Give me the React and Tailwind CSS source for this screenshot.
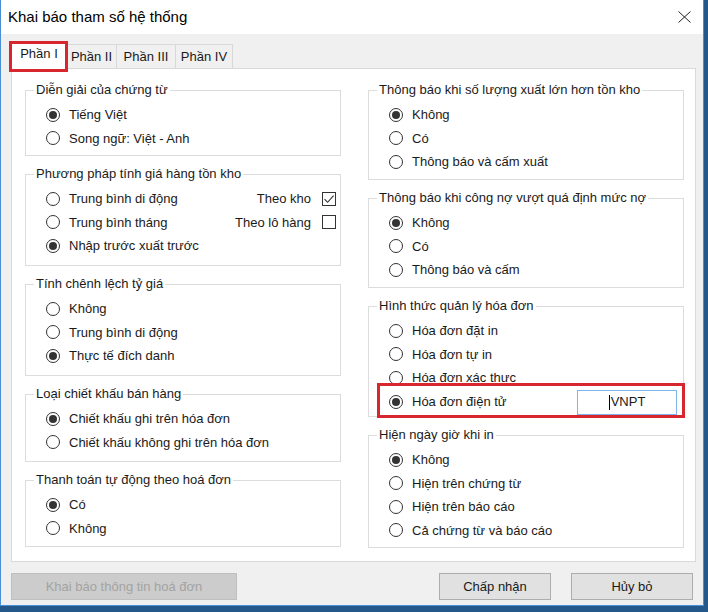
import React from 'react'

const Radio = ({ label, checked }) => (
  <div className="flex items-center h-[23.5px] pl-[20px] gap-[9px]">
    <span className="w-[14px] h-[14px] rounded-full border border-[#333] bg-white flex items-center justify-center shrink-0">
      {checked && <span className="w-[8px] h-[8px] rounded-full bg-[#333]"></span>}
    </span>
    <span>{label}</span>
  </div>
)

const Check = ({ checked }) => (
  <span className="w-[14px] h-[14px] border border-[#333] bg-white flex items-center justify-center shrink-0">
    {checked && (
      <svg width="12" height="12" viewBox="0 0 12 12">
        <path d="M1.5 6.2 L4.6 9.3 L10.6 2.6" fill="none" stroke="#333" strokeWidth="1.1" />
      </svg>
    )}
  </span>
)

const Group = ({ title, h, children }) => (
  <fieldset className={'border border-[#dcdcdc] ' + h}>
    <legend className="ml-[8px] px-[2px] leading-[16px]">{title}</legend>
    <div className="pt-[5px]">{children}</div>
  </fieldset>
)

const App = () => {
  return (
    <div className="w-[708px] h-[612px] bg-[#24578a] font-['Liberation_Sans',Arial,sans-serif] text-[13px] text-[#1a1a1a]">
      <div className="w-[704px] h-[606px] bg-[#f0f0f0] border-l border-r border-b border-[#4a8fd4] flex flex-col">
        {/* title bar */}
        <div className="h-[34px] bg-white flex items-center justify-between pl-[7px] pr-[12px] shrink-0">
          <span className="text-[15px] text-black">Khai báo tham số hệ thống</span>
          <svg width="13" height="12" viewBox="0 0 13 12">
            <path d="M0.5 0.5 L12.5 11.5 M12.5 0.5 L0.5 11.5" stroke="#222" strokeWidth="1" />
          </svg>
        </div>

        <div className="pt-[8px] pl-[10px]">
          {/* tabs */}
          <div className="flex items-end h-[27px] relative z-10">
            <div className="relative w-[56px] h-[27px] bg-white border border-b-0 border-[#d9d9d9] flex items-center justify-center pb-[4px]">
              Phần I
              <div className="absolute -left-[3px] -right-[2px] -top-[2px] -bottom-[3px] border-[3px] border-[#d7262e]"></div>
            </div>
            <div className="w-[50px] h-[24px] mb-[1px] border border-b-0 border-l-0 border-[#d9d9d9] flex items-center justify-center">Phần II</div>
            <div className="w-[59px] h-[24px] mb-[1px] border border-b-0 border-l-0 border-[#d9d9d9] flex items-center justify-center">Phần III</div>
            <div className="w-[57px] h-[24px] mb-[1px] border border-b-0 border-l-0 border-[#d9d9d9] flex items-center justify-center">Phần IV</div>
          </div>

          {/* panel */}
          <div className="-mt-px w-[685px] h-[494px] bg-white border border-[#d9d9d9] pt-[13px] pl-[13px] flex gap-[27px]">
            <div className="w-[316px] flex flex-col gap-[10px]">
              <Group title="Diễn giải của chứng từ" h="h-[74px]">
                <Radio label="Tiếng Việt" checked />
                <Radio label="Song ngữ: Việt - Anh" />
              </Group>
              <Group title="Phương pháp tính giá hàng tồn kho" h="h-[100px]">
                <div className="flex items-center">
                  <Radio label="Trung bình di động" />
                  <div className="ml-auto mr-[4px] flex items-center gap-[11px]">
                    <span>Theo kho</span>
                    <Check checked />
                  </div>
                </div>
                <div className="flex items-center">
                  <Radio label="Trung bình tháng" />
                  <div className="ml-auto mr-[4px] flex items-center gap-[11px]">
                    <span>Theo lô hàng</span>
                    <Check />
                  </div>
                </div>
                <Radio label="Nhập trước xuất trước" checked />
              </Group>
              <Group title="Tính chênh lệch tỷ giá" h="h-[100px]">
                <Radio label="Không" />
                <Radio label="Trung bình di động" />
                <Radio label="Thực tế đích danh" checked />
              </Group>
              <Group title="Loại chiết khấu bán hàng" h="h-[76px]">
                <Radio label="Chiết khấu ghi trên hóa đơn" checked />
                <Radio label="Chiết khấu không ghi trên hóa đơn" />
              </Group>
              <Group title="Thanh toán tự động theo hoá đơn" h="h-[75px]">
                <Radio label="Có" checked />
                <Radio label="Không" />
              </Group>
            </div>

            <div className="w-[316px] flex flex-col gap-[10px]">
              <Group title="Thông báo khi số lượng xuất lớn hơn tồn kho" h="h-[98px]">
                <Radio label="Không" checked />
                <Radio label="Có" />
                <Radio label="Thông báo và cấm xuất" />
              </Group>
              <Group title="Thông báo khi công nợ vượt quá định mức nợ" h="h-[98px]">
                <Radio label="Không" checked />
                <Radio label="Có" />
                <Radio label="Thông báo và cấm" />
              </Group>
              <Group title="Hình thức quản lý hóa đơn" h="h-[119px]">
                <Radio label="Hóa đơn đặt in" />
                <Radio label="Hóa đơn tự in" />
                <Radio label="Hóa đơn xác thực" />
                <div className="relative flex items-center">
                  <Radio label="Hóa đơn điện tử" checked />
                  <div className="ml-auto mr-[6px] w-[100px] h-[25px] border border-[#7eb4ea] bg-white flex items-center justify-center">
                    <span className="w-px h-[15px] bg-black mr-[1px]"></span>
                    <span>VNPT</span>
                  </div>
                  <div className="absolute left-[8px] -right-[2px] -top-[7px] -bottom-[3px] border-[3px] border-[#d7262e]"></div>
                </div>
              </Group>
              <Group title="Hiện ngày giờ khi in" h="h-[121px]">
                <Radio label="Không" checked />
                <Radio label="Hiện trên chứng từ" />
                <Radio label="Hiện trên báo cáo" />
                <Radio label="Cả chứng từ và báo cáo" />
              </Group>
            </div>
          </div>

          {/* buttons */}
          <div className="flex mt-[11px] pr-[10px]">
            <button className="w-[226px] h-[27px] bg-[#cccccc] border border-[#bfbfbf] text-[#a3a3a3]">Khai báo thông tin hoá đơn</button>
            <div className="ml-auto flex gap-[20px]">
              <button className="w-[112px] h-[27px] bg-[#e1e1e1] border border-[#adadad]">Chấp nhận</button>
              <button className="w-[122px] h-[27px] bg-[#e1e1e1] border border-[#adadad]">Hủy bỏ</button>
            </div>
          </div>
        </div>
      </div>
    </div>
  )
}

export default App
